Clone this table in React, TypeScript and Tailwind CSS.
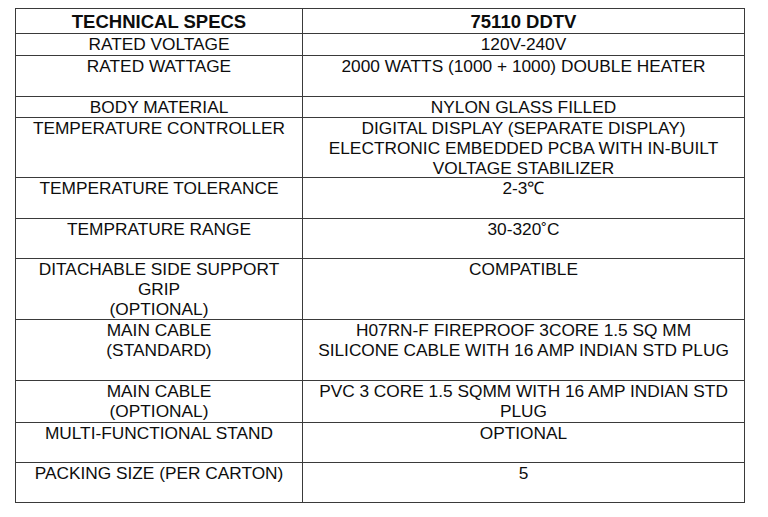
import React from "react";

type Row = { h: number; left: React.ReactNode; right: React.ReactNode };

const rows: Row[] = [
  { h: 22, left: "RATED VOLTAGE", right: "120V-240V" },
  { h: 41, left: "RATED WATTAGE", right: "2000 WATTS (1000 + 1000) DOUBLE HEATER" },
  { h: 21, left: "BODY MATERIAL", right: "NYLON GLASS FILLED" },
  {
    h: 60,
    left: "TEMPERATURE CONTROLLER",
    right: (
      <>
        DIGITAL DISPLAY (SEPARATE DISPLAY)
        <br />
        ELECTRONIC EMBEDDED PCBA WITH IN-BUILT
        <br />
        VOLTAGE STABILIZER
      </>
    ),
  },
  { h: 41, left: "TEMPERATURE TOLERANCE", right: "2-3℃" },
  { h: 40, left: "TEMPRATURE RANGE", right: "30-320˚C" },
  {
    h: 61,
    left: (
      <>
        DITACHABLE SIDE SUPPORT
        <br />
        GRIP
        <br />
        (OPTIONAL)
      </>
    ),
    right: "COMPATIBLE",
  },
  {
    h: 61,
    left: (
      <>
        MAIN CABLE
        <br />
        (STANDARD)
      </>
    ),
    right: (
      <>
        H07RN-F FIREPROOF 3CORE 1.5 SQ MM
        <br />
        SILICONE CABLE WITH 16 AMP INDIAN STD PLUG
      </>
    ),
  },
  {
    h: 42,
    left: (
      <>
        MAIN CABLE
        <br />
        (OPTIONAL)
      </>
    ),
    right: (
      <>
        PVC 3 CORE 1.5 SQMM WITH 16 AMP INDIAN STD
        <br />
        PLUG
      </>
    ),
  },
  { h: 40, left: "MULTI-FUNCTIONAL STAND", right: "OPTIONAL" },
  { h: 40, left: "PACKING SIZE (PER CARTON)", right: "5" },
];

export default function App() {
  return (
    <div
      className="w-[768px] h-[517px] bg-white overflow-hidden pt-[8px] pl-[15px] text-[#0d0d0d]"
      style={{ fontFamily: '"Liberation Sans", Arial, sans-serif' }}
    >
      <div className="w-[730px] border-l border-t border-[#3a3a3a] flex flex-col">
        <div className="flex h-[25px]">
          <div className="w-[287px] shrink-0 border-r border-b border-[#3a3a3a] text-center font-bold text-[18.5px] leading-[21px] pt-[1.5px]">
            TECHNICAL SPECS
          </div>
          <div className="w-[442px] shrink-0 border-r border-b border-[#3a3a3a] text-center font-bold text-[18.5px] leading-[21px] pt-[1.5px]">
            75110 DDTV
          </div>
        </div>
        {rows.map((r, i) => (
          <div key={i} className="flex" style={{ height: r.h }}>
            <div className="w-[287px] shrink-0 border-r border-b border-[#3a3a3a] text-center text-[17.3px] leading-[20px] overflow-hidden">
              {r.left}
            </div>
            <div className="w-[442px] shrink-0 border-r border-b border-[#3a3a3a] text-center text-[17.3px] leading-[20px] overflow-hidden">
              {r.right}
            </div>
          </div>
        ))}
      </div>
    </div>
  );
}
